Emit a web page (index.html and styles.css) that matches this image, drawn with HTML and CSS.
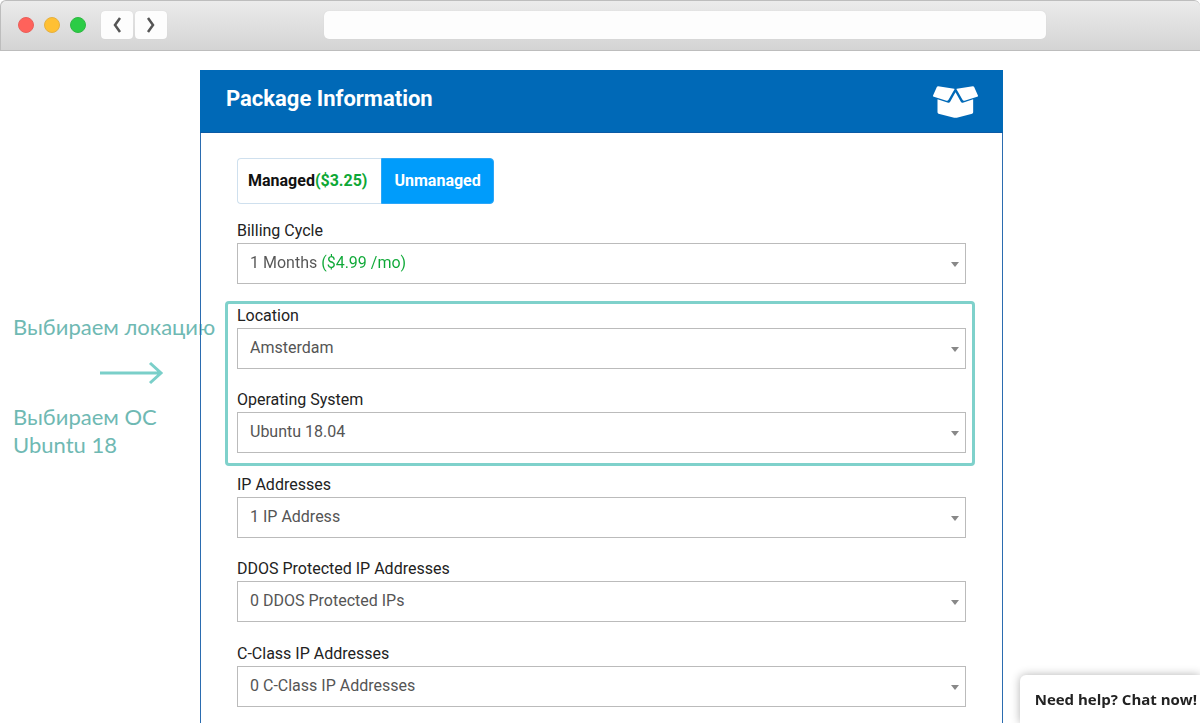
FILE: index.html
```html
<!DOCTYPE html>
<html lang="en">
<head>
<meta charset="utf-8">
<meta name="viewport" content="width=device-width, initial-scale=1">
<title>Package Information</title>
<link rel="stylesheet" href="styles.css">
</head>
<body>
<header class="toolbar">
  <div class="lights">
    <span class="light light-close"></span>
    <span class="light light-minimize"></span>
    <span class="light light-zoom"></span>
  </div>
  <nav class="history">
    <button class="history-button" type="button" aria-label="Back">
      <svg width="10" height="18" viewBox="0 0 10 18"><path d="M8 2L3 9l5 7"/></svg>
    </button>
    <button class="history-button" type="button" aria-label="Forward">
      <svg width="10" height="18" viewBox="0 0 10 18"><path d="M2 2l5 7-5 7"/></svg>
    </button>
  </nav>
  <input class="address" type="text" aria-label="Address">
</header>

<div class="page">
  <aside class="notes" lang="ru">
    <p class="note">Выбираем локацию</p>
    <svg class="arrow" width="64" height="24" viewBox="0 0 64 24"><path d="M0 12h60M50 2l11 10-11 10"/></svg>
    <p class="note">Выбираем ОС<br>Ubuntu 18</p>
  </aside>

  <main class="panel">
    <div class="panel-header">
      <h1 class="panel-title">Package Information</h1>
      <svg class="box-icon" width="45" height="32" viewBox="100 78 134 96">
        <path d="M115 79l48 7q2 0 1 2l-18 31q-2 4-6 3l-38-12q-4-1-2-4l11-25q1-2 4-2z"/>
        <path d="M219 79l-48 7q-2 0-1 2l18 31q2 4 6 3l38-12q4-1 2-4l-11-25q-1-2-4-2z"/>
        <path d="M113 118l32 10q4 1 6-3l16-28 16 28q2 4 6 3l31-10v39q0 3-3 4l-46 12q-4 1-8 0l-47-12q-3-1-3-4z"/>
      </svg>
    </div>

    <form class="panel-body">
      <div class="toggle">
        <button class="toggle-option" type="button" aria-pressed="false">Managed<span class="price">($3.25)</span></button>
        <button class="toggle-option toggle-active" type="button" aria-pressed="true">Unmanaged</button>
      </div>

      <div class="groups">
        <div class="group">
          <div class="field">
            <label class="label" for="billing">Billing Cycle</label>
            <div class="select-wrap"><select class="select select-priced" id="billing"><option>1 Months ($4.99 /mo)</option></select></div>
          </div>
        </div>
        <div class="group group-highlighted">
          <div class="field">
            <label class="label" for="location">Location</label>
            <div class="select-wrap"><select class="select" id="location"><option>Amsterdam</option></select></div>
          </div>
          <div class="field">
            <label class="label" for="os">Operating System</label>
            <div class="select-wrap"><select class="select" id="os"><option>Ubuntu 18.04</option></select></div>
          </div>
        </div>
        <div class="group">
          <div class="field">
            <label class="label" for="ip">IP Addresses</label>
            <div class="select-wrap"><select class="select" id="ip"><option>1 IP Address</option></select></div>
          </div>
          <div class="field">
            <label class="label" for="ddos">DDOS Protected IP Addresses</label>
            <div class="select-wrap"><select class="select" id="ddos"><option>0 DDOS Protected IPs</option></select></div>
          </div>
        </div>
        <div class="group">
          <div class="field">
            <label class="label" for="cclass">C-Class IP Addresses</label>
            <div class="select-wrap"><select class="select" id="cclass"><option>0 C-Class IP Addresses</option></select></div>
          </div>
        </div>
      </div>
    </form>
  </main>
</div>

<button class="chat" type="button">Need help? Chat now!</button>
</body>
</html>
```

FILE: styles.css
```css
* {
  box-sizing: border-box;
}

body {
  margin: 0;
  min-height: 100vh;
  display: flex;
  flex-direction: column;
  background: #fff;
  font-family: Roboto, "Liberation Sans", sans-serif;
  font-size: 16px;
  color: #222;
}

button,
input,
select {
  font: inherit;
}

.toolbar {
  display: flex;
  align-items: center;
  padding: 10px 154px 11px 17px;
  border: 1px solid #bdbdbd;
  border-right: 0;
  border-radius: 6px 6px 0 0;
  background: linear-gradient(#ebebeb, #d4d4d4);
}

.lights {
  display: flex;
  gap: 10px;
}

.light {
  width: 16px;
  height: 16px;
  border: 1px solid;
  border-radius: 50%;
}

.light-close {
  background: #ff625b;
  border-color: #e9605b;
}

.light-minimize {
  background: #ffc033;
  border-color: #e5b040;
}

.light-zoom {
  background: #2bcc45;
  border-color: #2fb843;
}

.history {
  display: flex;
  gap: 2px;
  margin-left: 15px;
}

.history-button {
  display: flex;
  align-items: center;
  justify-content: center;
  width: 32px;
  height: 28px;
  padding: 0;
  border: 0;
  border-radius: 4px;
  background: #fdfdfd;
  box-shadow: 0 0 1px #ccc;
}

.history-button path {
  fill: none;
  stroke: #555;
  stroke-width: 2.5;
}

.address {
  flex: 1;
  min-width: 0;
  height: 28px;
  margin-left: 157px;
  padding: 0 12px;
  border: 0;
  border-radius: 5px;
  background: #fdfdfd;
  box-shadow: 0 0 1px #ccc;
}

.page {
  flex: 1;
  display: grid;
  grid-template-columns: 200px minmax(0, 1fr) 197px;
  padding-top: 19px;
}

.notes {
  padding: 243px 0 0 13px;
  color: #6fb9b3;
  font-family: Lato, "Noto Sans", sans-serif;
  font-size: 22px;
  line-height: 28px;
  white-space: nowrap;
}

.note {
  margin: 0;
}

.arrow {
  display: block;
  margin: 20px 0 18px 87px;
}

.arrow path {
  fill: none;
  stroke: #7acfc9;
  stroke-width: 3;
}

.panel {
  border: 1px solid #2b6cb0;
  border-width: 0 1px;
}

.panel-header {
  display: flex;
  justify-content: space-between;
  margin: 0 -1px;
  padding: 14px 25px 14px 26px;
  border-bottom: 1px solid #0a5aa5;
  background: #0069b7;
}

.panel-title {
  margin: 0;
  color: #fff;
  font-size: 22px;
  font-weight: 700;
  line-height: 30px;
}

.box-icon {
  margin-top: 2px;
  fill: #fff;
}

.panel-body {
  padding: 25px 36px 16px;
}

.toggle {
  display: flex;
}

.toggle-option {
  height: 46px;
  padding: 0 14px 2px 10px;
  border: 1px solid #cfe0ee;
  border-right: 0;
  border-radius: 4px 0 0 4px;
  background: #fff;
  color: #111;
  font-weight: 700;
}

.toggle-active {
  padding: 0 12px 2px;
  border: 1px solid #2ba6f8;
  border-radius: 0 4px 4px 0;
  background: #009cfb;
  color: #fff;
}

.price {
  color: #0da836;
}

.groups {
  display: grid;
  gap: 20px;
  margin-top: 15px;
}

.group {
  display: grid;
  gap: 19px;
}

.group-highlighted {
  position: relative;
}

.group-highlighted::before {
  content: "";
  position: absolute;
  inset: -3px -9px -13px -12px;
  border: 3px solid #7fd1cb;
  border-radius: 4px;
  pointer-events: none;
}

.label {
  display: block;
  line-height: 24px;
}

.select-wrap {
  position: relative;
  border: 1px solid #bbb;
}

.select-wrap::after {
  content: "";
  position: absolute;
  top: 18px;
  right: 6px;
  border: 4px solid transparent;
  border-top: 5px solid #888;
  border-bottom: 0;
  pointer-events: none;
}

.select {
  display: block;
  width: 100%;
  height: 39px;
  padding: 0 24px 3px 12px;
  border: 0;
  appearance: none;
  background: transparent;
  color: #555;
}

.select-priced {
  background: linear-gradient(to right, #555 82px, #0da836 82px);
  background-clip: text;
  color: transparent;
}

.chat {
  position: fixed;
  right: 0;
  bottom: 0;
  height: 48px;
  padding: 0 3px 0 15px;
  border: 0;
  border-radius: 6px 0 0 0;
  background: #fff;
  box-shadow: 0 0 10px rgba(0, 0, 0, 0.3);
  color: #222;
  font-family: "Open Sans", "Noto Sans", sans-serif;
  font-size: 15px;
  font-weight: 700;
}
```
